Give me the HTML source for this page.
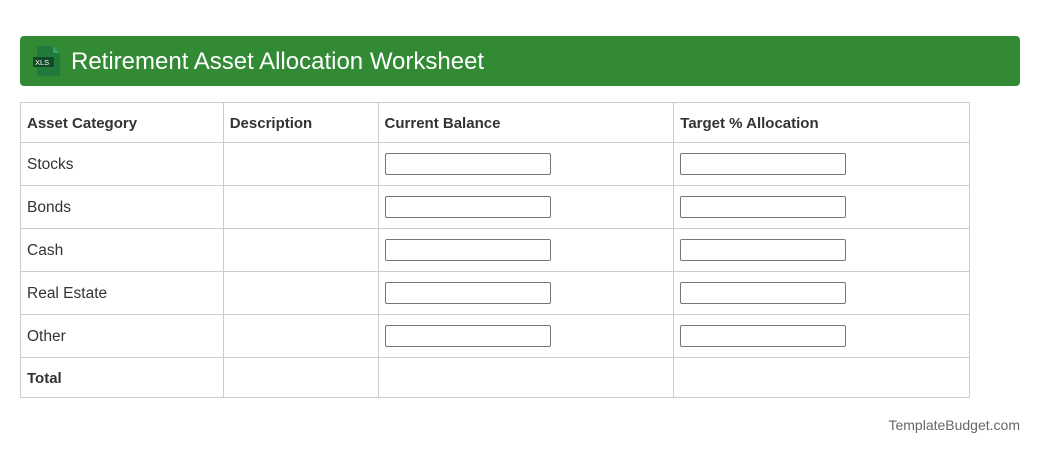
<!DOCTYPE html>
<html><head><meta charset="utf-8"><style>
body{margin:0;background:#fff;font-family:"Liberation Sans",Arial,sans-serif;color:#333;}
.hdr{position:absolute;left:20px;top:36px;width:1000px;height:50px;background:#328a35;border-radius:4px;}
.hdr .t{position:absolute;left:51px;top:12px;font-size:24px;color:#fff;}
table{position:absolute;left:20px;top:102px;border-collapse:collapse;width:950px;}
td{border:1px solid #ccc;padding:2px 0 0 6px;font-size:15.5px;height:43px;box-sizing:border-box;}
tr.h td{height:40px;font-weight:bold;font-size:15px;}
.in{width:166px;height:22px;border:1px solid #777;border-radius:2px;box-sizing:border-box;margin-top:-2px;}
.foot{position:absolute;right:20px;top:417px;font-size:14px;color:#666;}
</style></head><body>
<div class="hdr">
<svg style="position:absolute;left:12px;top:9px" width="30" height="32" viewBox="0 0 30 32">
<path d="M6 1h15l7 7v22a1 1 0 0 1-1 1H6a1 1 0 0 1-1-1V2a1 1 0 0 1 1-1z" fill="#1f7a3c"/>
<path d="M21 1v7h7z" fill="#38a05a"/>
<rect x="1" y="12" width="21" height="10" fill="#124a28"/>
<text x="3" y="20" font-size="7.5" fill="#fff" font-family="Liberation Sans">XLS</text>
</svg>
<div class="t">Retirement Asset Allocation Worksheet</div></div>
<table>
<colgroup><col style="width:203px"><col style="width:155px"><col style="width:296px"><col style="width:296px"></colgroup>
<tr class="h"><td>Asset Category</td><td>Description</td><td>Current Balance</td><td>Target % Allocation</td></tr>
<tr><td>Stocks</td><td></td><td><div class="in"></div></td><td><div class="in"></div></td></tr>
<tr><td>Bonds</td><td></td><td><div class="in"></div></td><td><div class="in"></div></td></tr>
<tr><td>Cash</td><td></td><td><div class="in"></div></td><td><div class="in"></div></td></tr>
<tr><td>Real Estate</td><td></td><td><div class="in"></div></td><td><div class="in"></div></td></tr>
<tr><td>Other</td><td></td><td><div class="in"></div></td><td><div class="in"></div></td></tr>
<tr class="h"><td>Total</td><td></td><td></td><td></td></tr>
</table>
<div class="foot">TemplateBudget.com</div>
</body></html>
